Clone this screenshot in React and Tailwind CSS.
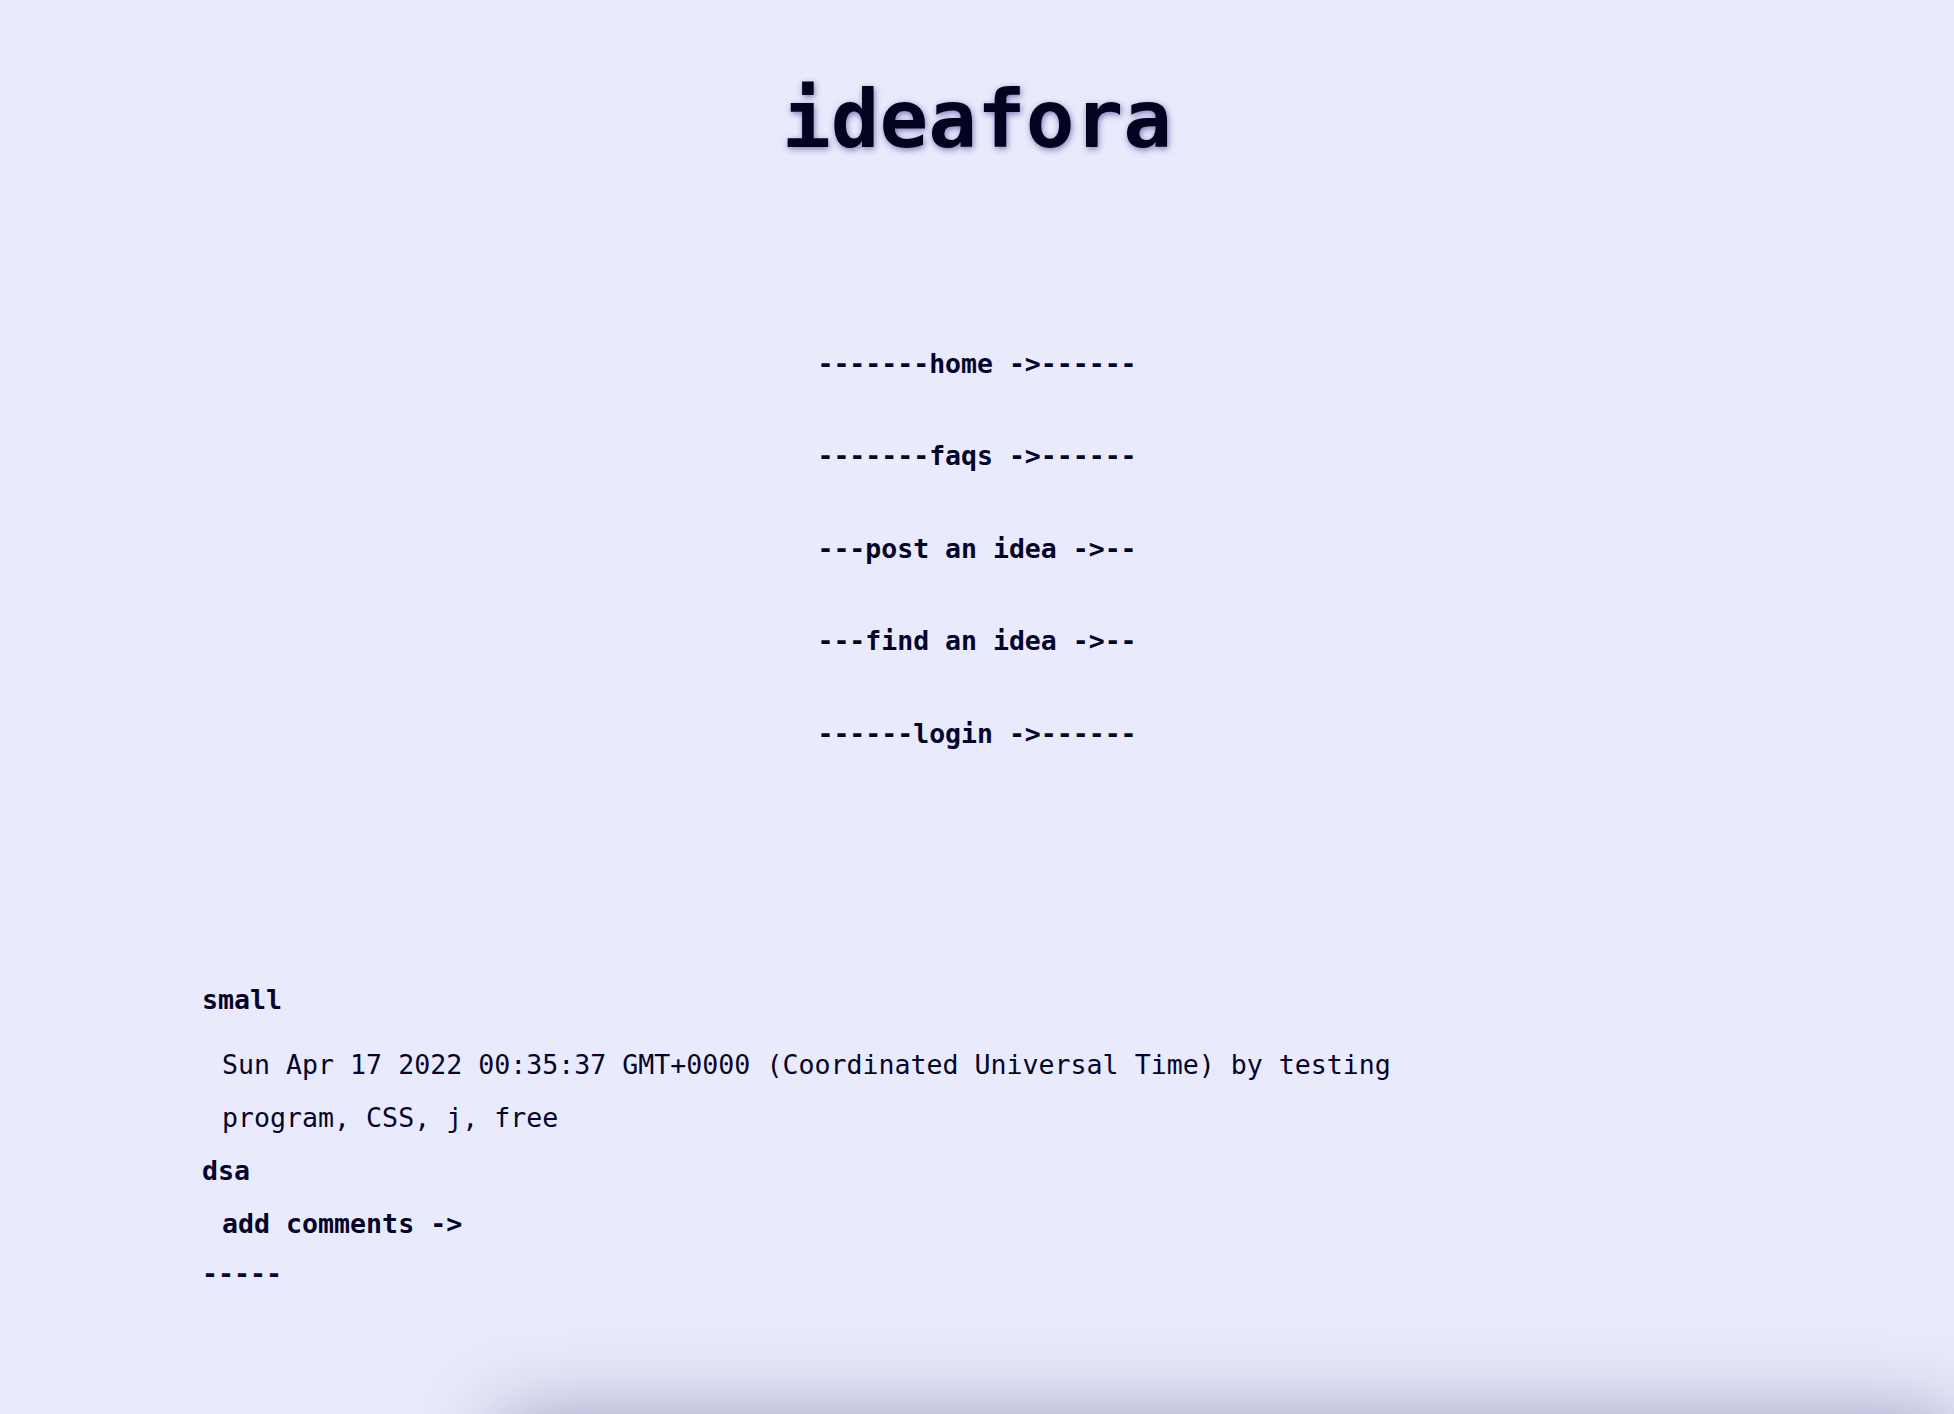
export default function App() {
  const mono = "font-['DejaVu_Sans_Mono','Liberation_Mono',monospace]";
  const nav = [
    "-------home ->------",
    "-------faqs ->------",
    "---post an idea ->--",
    "---find an idea ->--",
    "------login ->------",
  ];
  return (
    <div className={`${mono} min-h-screen bg-[#e9eafb] text-[#05042a] overflow-hidden`}>
      <h1 className="pt-[78.5px] text-center text-[81px] leading-[81px] font-bold text-[#03021f] [text-shadow:1px_2px_6px_rgba(40,30,130,0.55)]">
        ideafora
      </h1>
      <nav className="mt-[158px] flex flex-col items-center">
        {nav.map((t) => (
          <a key={t} className="block whitespace-pre text-[26.5px] leading-[92.6px] font-bold">
            {t}
          </a>
        ))}
      </nav>
      <div className="mt-[193px] pl-[202px] text-[26.6px] leading-[53px]">
        <div className="font-bold">small</div>
        <div className="mt-[12px] pl-[4px] whitespace-pre">{" Sun Apr 17 2022 00:35:37 GMT+0000 (Coordinated Universal Time) by testing"}</div>
        <div className="pl-[4px] whitespace-pre">{" program, CSS, j, free"}</div>
        <div className="font-bold">dsa</div>
        <div className="pl-[4px] font-bold whitespace-pre">{" add comments ->"}</div>
        <div className="font-bold leading-[48px]">-----</div>
      </div>
      <div className="mt-[120px] ml-[500px] h-[200px] bg-[#e9eafb] shadow-[0_0_80px_rgba(30,30,90,0.38)]"></div>
    </div>
  );
}
